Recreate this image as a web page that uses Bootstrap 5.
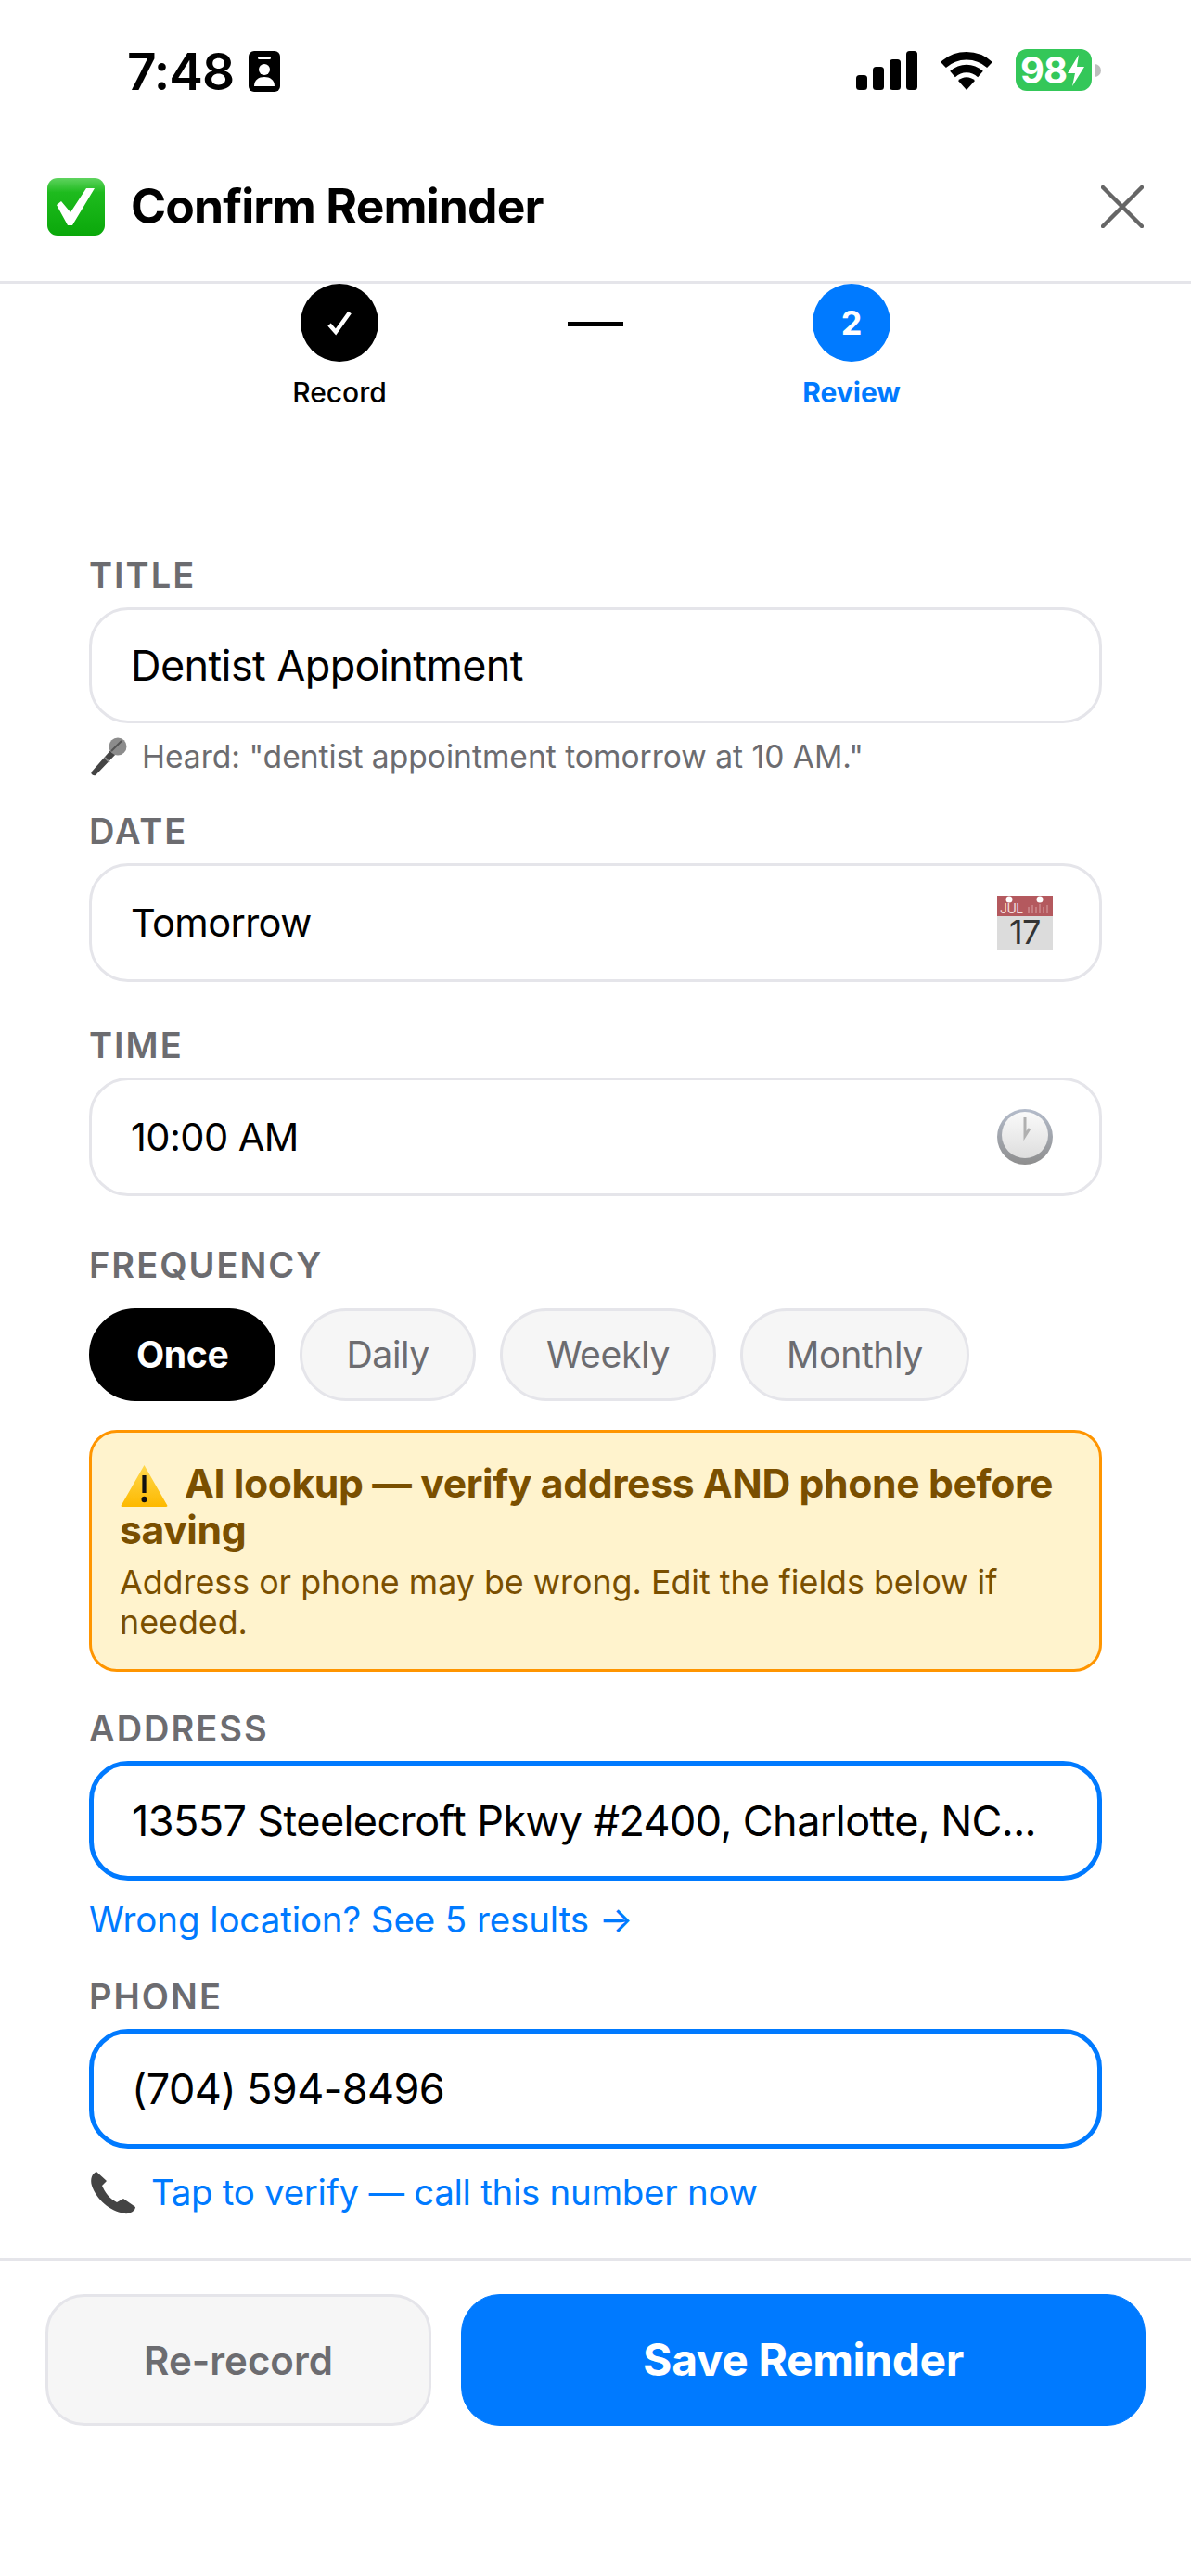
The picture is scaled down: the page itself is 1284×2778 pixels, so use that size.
<!DOCTYPE html>
<html lang="en">
<head>
    <meta charset="UTF-8">
    <meta name="viewport" content="width=device-width, initial-scale=1.0">
    <title>Confirm Reminder</title>
    <link href="https://cdn.jsdelivr.net/npm/bootstrap@5.3.0/dist/css/bootstrap.min.css" rel="stylesheet">
    <style>
        body {
            background: #fff;
            font-family: Inter, "Liberation Sans", sans-serif;
            color: #000;
        }
        .status-bar {
            height: 142px;
            padding: 53px 97px 0 137px;
        }
        .status-time {
            font-size: 55px;
            font-weight: 600;
            line-height: 48px;
            letter-spacing: -1px;
        }
        .battery-box {
            width: 82px;
            height: 45px;
            margin-left: 3px;
            border-radius: 12px;
            background: #34c759;
            color: #fff;
            font-size: 40px;
            font-weight: 700;
            line-height: 45px;
            padding-left: 5px;
            letter-spacing: -1px;
        }
        .battery-nub {
            width: 7px;
            height: 14px;
            margin-left: 3px;
            border-radius: 0 7px 7px 0;
            background: #bdbdbd;
        }
        .top-header {
            height: 164px;
            padding: 0 51px;
            border-bottom: 3px solid #e5e5ea;
        }
        .top-title {
            font-size: 51.6px;
            font-weight: 700;
            letter-spacing: -0.9px;
            margin: 0 0 0 28px;
        }
        .stepper { gap: 146px; }
        .step-item { width: 200px; }
        .step-dot {
            width: 84px;
            height: 84px;
            border-radius: 50%;
            font-size: 36px;
            font-weight: 700;
            color: #fff;
            background: #000;
        }
        .step-dot.is-current { background: #007aff; }
        .step-name {
            font-size: 30px;
            line-height: 40px;
            margin-top: 13px;
            font-weight: 500;
        }
        .step-name.is-current { color: #007aff; font-weight: 700; }
        .step-dash {
            width: 60px;
            height: 5px;
            margin-top: 41px;
            background: #000;
        }
        .form-area { padding: 157px 96px 0; }
        .field-label {
            display: block;
            font-size: 38px;
            font-weight: 600;
            line-height: 40px;
            letter-spacing: 2px;
            color: #6c6c70;
            margin: 0 0 15px;
        }
        .field-box {
            height: 128px;
            padding: 0 50px 0 42px;
            border: 3px solid #e5e5ea;
            border-radius: 42px;
            font-size: 45px;
            letter-spacing: -0.6px;
            background: #fff;
        }
        .field-box.is-short { height: 125px; }
        .field-box.is-picker { font-size: 41.6px; }
        .field-box.is-ai {
            border: 5px solid #007aff;
            padding: 0 41px;
            height: 129px;
        }
        .heard-row {
            height: 44px;
            margin: 14px 0 38px;
            gap: 15px;
            font-size: 33.6px;
            color: #6c6c70;
        }
        .time-group { margin: 48px 0 54px; }
        .chip-row { gap: 26px; margin-top: 27px; }
        .freq-chip {
            height: 100px;
            padding: 0 47px;
            border: 3px solid #e5e5ea;
            border-radius: 50px;
            background: #f6f6f6;
            color: #6c6c70;
            font-size: 39.2px;
            letter-spacing: -0.4px;
        }
        .freq-chip.is-active {
            background: #000;
            border-color: #000;
            color: #fff;
            font-weight: 700;
            padding: 0 48px;
        }
        .ai-warning {
            height: 261px;
            margin: 31px 0 41px;
            padding: 30px 30px 0;
            background: #fff3cd;
            border: 3px solid #ff9500;
            border-radius: 30px;
            color: #7a4f00;
        }
        .ai-warning-title {
            font-size: 42.7px;
            font-weight: 700;
            line-height: 49px;
            letter-spacing: -0.4px;
        }
        .warn-icon { margin: 0 18px 0 1px; }
        .ai-warning-text {
            font-size: 35.8px;
            line-height: 43px;
            margin-top: 11px;
        }
        .hint-link {
            display: block;
            font-size: 38.5px;
            line-height: 44px;
            color: #007aff;
            text-decoration: none;
            letter-spacing: -0.3px;
        }
        .address-link { margin: 20px 0 41px; letter-spacing: -0.1px; }
        .verify-row { margin-top: 25px; gap: 16px; height: 44px; }
        .bottom-bar {
            margin-top: 49px;
            padding: 36px 49px 0;
            gap: 32px;
            border-top: 3px solid #e5e5ea;
        }
        .rerecord-btn {
            width: 416px;
            height: 142px;
            border: 3px solid #e5e5ea;
            border-radius: 42px;
            background: #f6f6f6;
            color: #6c6c70;
            font-size: 42px;
            font-weight: 600;
        }
        .save-btn {
            width: 738px;
            height: 142px;
            border-radius: 42px;
            background: #007aff;
            border-color: #007aff;
            color: #fff;
            font-size: 48px;
            font-weight: 700;
            letter-spacing: -0.4px;
        }
    </style>
</head>
<body>

<div class="status-bar d-flex justify-content-between align-items-start">
    <div class="d-flex align-items-center">
        <span class="status-time">7:48</span>
        <svg class="ms-3" width="34" height="44" viewBox="0 0 34 44">
            <rect width="34" height="44" rx="6" fill="#000"/>
            <rect x="10" y="6" width="14" height="3" rx="1.5" fill="#fff"/>
            <circle cx="17" cy="20" r="6" fill="#fff"/>
            <path d="M6 38c0-7 5-10 11-10s11 3 11 10z" fill="#fff"/>
        </svg>
    </div>
    <div class="d-flex align-items-center">
        <svg width="66" height="42" viewBox="0 0 66 42">
            <rect x="0" y="26" width="12" height="16" rx="3.5"/>
            <rect x="18" y="17" width="12" height="25" rx="3.5"/>
            <rect x="36" y="9" width="12" height="33" rx="3.5"/>
            <rect x="54" y="0" width="12" height="42" rx="3.5"/>
        </svg>
        <svg class="ms-4" width="58" height="43" viewBox="0 0 58 43">
            <path d="M4 16C18 3 40 3 54 16" fill="none" stroke="#000" stroke-width="8.5"/>
            <path d="M14 26C23 18 35 18 44 26" fill="none" stroke="#000" stroke-width="8.5"/>
            <path d="M20 33C25 28 33 28 38 33L29 43z" fill="#000"/>
        </svg>
        <div class="battery-box ms-4 d-flex align-items-center">98<svg width="20" height="38" viewBox="0 0 20 36"><path d="M13 1 1 21h8l-3 14L19 14h-8z" fill="#fff"/></svg></div>
        <div class="battery-nub"></div>
    </div>
</div>

<header class="top-header d-flex align-items-center">
    <svg width="62" height="62" viewBox="0 0 62 62">
        <defs>
            <linearGradient id="checkGreen" x1="0" y1="0" x2="0" y2="1">
                <stop offset="0" stop-color="#5fd35f"/>
                <stop offset="0.25" stop-color="#1ebb1e"/>
                <stop offset="1" stop-color="#0aa80a"/>
            </linearGradient>
        </defs>
        <rect width="62" height="62" rx="11" fill="url(#checkGreen)"/>
        <path d="M10 29 15 25 25 37 42 11 51 11 27 51 22 51z" fill="#fff"/>
    </svg>
    <h1 class="top-title">Confirm Reminder</h1>
    <svg class="ms-auto" width="46" height="46" viewBox="0 0 46 46">
        <path d="M2 2 44 44M44 2 2 44" stroke="#666" stroke-width="4.5" stroke-linecap="round"/>
    </svg>
</header>

<div class="stepper d-flex justify-content-center align-items-start">
    <div class="step-item d-flex flex-column align-items-center">
        <div class="step-dot d-flex align-items-center justify-content-center">
            <svg width="28" height="28" viewBox="0 0 28 28"><path d="M3 16 10 24 25 3" fill="none" stroke="#fff" stroke-width="4.5"/></svg>
        </div>
        <div class="step-name">Record</div>
    </div>
    <div class="step-dash"></div>
    <div class="step-item d-flex flex-column align-items-center">
        <div class="step-dot is-current d-flex align-items-center justify-content-center">2</div>
        <div class="step-name is-current">Review</div>
    </div>
</div>

<main class="form-area">
    <label class="field-label">TITLE</label>
    <div class="field-box is-short d-flex align-items-center">Dentist Appointment</div>
    <div class="heard-row d-flex align-items-center">
        <svg width="42" height="42" viewBox="0 0 42 42">
            <path d="M3 37 25 12 30 17 7 41C4 42 1 39 3 37z" fill="#444"/>
            <path d="M17 22l5 5" stroke="#888" stroke-width="2"/>
            <circle cx="31" cy="10" r="9.5" fill="#8c8c8c"/>
            <path d="M24 15 35 4" stroke="#555" stroke-width="2"/>
        </svg>
        <span>Heard: "dentist appointment tomorrow at 10 AM."</span>
    </div>

    <label class="field-label">DATE</label>
    <div class="field-box is-picker d-flex align-items-center justify-content-between">
        <span>Tomorrow</span>
        <svg class="overflow-visible" width="60" height="58" viewBox="0 0 60 58">
            <rect width="60" height="58" fill="#dcdcdc"/>
            <rect width="60" height="22" fill="#b4595e"/>
            <circle cx="13" cy="4" r="3.5" fill="#fff"/>
            <circle cx="46" cy="4" r="3.5" fill="#fff"/>
            <path d="M34 19v-7M38 19v-9M42 19v-7M46 19v-10M50 19v-7M54 19v-9" stroke="#d9a3a5" stroke-width="1"/>
            <text x="3" y="19" font-size="14" fill="#f3dcdc" font-family="Inter, sans-serif">JUL</text>
            <text x="30" y="52" text-anchor="middle" font-size="36" fill="#333" font-family="Inter, sans-serif">17</text>
        </svg>
    </div>

    <div class="time-group">
        <label class="field-label">TIME</label>
        <div class="field-box is-picker d-flex align-items-center justify-content-between">
            <span>10:00 AM</span>
            <svg width="60" height="60" viewBox="0 0 60 60">
                <defs>
                    <linearGradient id="clockRim" x1="0" y1="0" x2="0" y2="1">
                        <stop offset="0" stop-color="#b4bccb"/>
                        <stop offset="1" stop-color="#8e8e8e"/>
                    </linearGradient>
                    <linearGradient id="clockFace" x1="0" y1="0" x2="0" y2="1">
                        <stop offset="0" stop-color="#fafafa"/>
                        <stop offset="1" stop-color="#dedede"/>
                    </linearGradient>
                </defs>
                <circle cx="30" cy="30" r="30" fill="url(#clockRim)"/>
                <circle cx="30" cy="28" r="25" fill="url(#clockFace)"/>
                <path d="M30 9V29L35 21" fill="none" stroke="#b0b0b0" stroke-width="3"/>
            </svg>
        </div>
    </div>

    <label class="field-label m-0">FREQUENCY</label>
    <div class="chip-row d-flex">
        <div class="freq-chip is-active d-flex align-items-center">Once</div>
        <div class="freq-chip d-flex align-items-center">Daily</div>
        <div class="freq-chip d-flex align-items-center">Weekly</div>
        <div class="freq-chip d-flex align-items-center">Monthly</div>
    </div>

    <div class="ai-warning">
        <div class="ai-warning-title">
            <svg class="warn-icon align-text-bottom" width="51" height="46" viewBox="0 0 54 46" preserveAspectRatio="none">
                <defs>
                    <linearGradient id="warnYellow" x1="0" y1="0" x2="0" y2="1">
                        <stop offset="0" stop-color="#ffd84d"/>
                        <stop offset="1" stop-color="#fdb900"/>
                    </linearGradient>
                </defs>
                <path d="M27 1 53 44C54 45 53 46 52 46H2C1 46 0 45 1 44z" fill="url(#warnYellow)"/>
                <path d="M27 12V31" stroke="#111" stroke-width="4.5"/>
                <circle cx="27" cy="38" r="3.2" fill="#111"/>
            </svg>AI lookup — verify address AND phone before saving
        </div>
        <div class="ai-warning-text">Address or phone may be wrong. Edit the fields below if needed.</div>
    </div>

    <label class="field-label">ADDRESS</label>
    <div class="field-box is-ai d-flex align-items-center">13557 Steelecroft Pkwy #2400, Charlotte, NC...</div>
    <a class="hint-link address-link" href="#">Wrong location? See 5 results →</a>

    <label class="field-label">PHONE</label>
    <div class="field-box is-ai d-flex align-items-center">(704) 594-8496</div>
    <div class="verify-row d-flex align-items-center">
        <svg width="51" height="48" viewBox="0 0 51 48">
            <path d="M8 2C3 4 1 10 3 17 8 32 22 44 38 47 44 48 50 44 50 40L37 31 30 35C22 31 17 24 14 17L19 12z" fill="#444"/>
        </svg>
        <a class="hint-link" href="#">Tap to verify — call this number now</a>
    </div>
</main>

<footer class="bottom-bar d-flex">
    <button type="button" class="btn rerecord-btn">Re-record</button>
    <button type="button" class="btn save-btn">Save Reminder</button>
</footer>

<script src="https://cdn.jsdelivr.net/npm/bootstrap@5.3.0/dist/js/bootstrap.bundle.min.js"></script>
</body>
</html>
